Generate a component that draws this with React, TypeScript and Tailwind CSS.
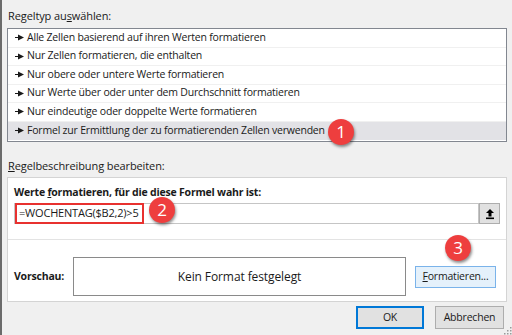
import React from 'react';

const rules = [
  'Alle Zellen basierend auf ihren Werten formatieren',
  'Nur Zellen formatieren, die enthalten',
  'Nur obere oder untere Werte formatieren',
  'Nur Werte über oder unter dem Durchschnitt formatieren',
  'Nur eindeutige oder doppelte Werte formatieren',
  'Formel zur Ermittlung der zu formatierenden Zellen verwenden',
];

const font = { fontFamily: '"Open Sans", "Noto Sans", sans-serif' };

const Badge = ({ n, className }: { n: number; className: string }) => (
  <div
    className={`absolute flex h-[26px] w-[26px] items-center justify-center rounded-full bg-[#ee3e3e] text-[17px] tracking-normal text-white shadow-[1px_2px_3px_rgba(0,0,0,0.45)] ${className}`}
  >
    {n}
  </div>
);

const Pointer = () => (
  <svg width="9" height="7" viewBox="0 0 9 7" className="shrink-0">
    <rect x="0" y="3" width="4" height="1" fill="#1a1a1a" />
    <path d="M3 0.5 L9 3.5 L3 6.5 Z" fill="#1a1a1a" />
  </svg>
);

const UploadIcon = () => (
  <svg width="10" height="12" viewBox="0 0 10 12">
    <path d="M5 1 L9 5 L6.5 5 L6.5 8.5 L3.5 8.5 L3.5 5 L1 5 Z" fill="#000" />
    <rect x="1" y="9.5" width="8" height="1.6" fill="#000" />
  </svg>
);

const Grip = () => (
  <svg width="10" height="10" viewBox="0 0 10 10">
    {[
      [8, 2],
      [5, 5],
      [8, 5],
      [2, 8],
      [5, 8],
      [8, 8],
    ].map(([x, y]) => (
      <rect key={`${x}-${y}`} x={x} y={y} width="1.5" height="1.5" fill="#9a9a9a" />
    ))}
  </svg>
);

const App = () => {
  return (
    <div
      className="relative h-[335px] w-[512px] overflow-hidden border-l-2 border-[#6b6b6b] bg-[#f0f0f0] pl-[5px] pr-[5px] text-[10.5px] tracking-[-0.2px] text-[#1a1a1a]"
      style={font}
    >
      {/* Regeltyp */}
      <div className="flex h-[28px] items-end pb-[4px] pl-[1px] text-[11px] tracking-[-0.1px]">
        <span>
          Regeltyp au<span className="underline">s</span>wählen:
        </span>
      </div>
      <div className="border border-[#828790] bg-white">
        {rules.map((r, i) => (
          <div
            key={r}
            className={`flex h-[18.5px] items-center gap-[3px] pl-[7px] ${
              i === rules.length - 1 ? 'bg-[#e2e2e6]' : 'border-b border-[#f0f0f0]'
            }`}
          >
            <Pointer />
            <span>{r}</span>
          </div>
        ))}
        <div className="h-[1px]" />
      </div>

      {/* Regelbeschreibung */}
      <div className="flex h-[35px] items-end pb-[3px] pl-[1px] text-[11px] tracking-[-0.1px]">
        <span>
          <span className="underline">R</span>egelbeschreibung bearbeiten:
        </span>
      </div>
      <div className="h-[125px] border border-[#d4d4d4] bg-white">
        <div className="border-b border-[#e3e3e3] px-[6px] pb-[15px] pt-[7px]">
          <div className="h-[18px] font-bold">
            Werte <span className="underline">f</span>ormatieren, für die diese Formel wahr ist:
          </div>
          <div className="flex h-[21px] items-stretch">
            <div className="flex flex-1 items-center border border-[#c5c5c5]">
              <div className="flex h-[21px] w-[129px] items-center border-2 border-[#e8312f] pl-[2px] text-[11px]">
                =WOCHENTAG($B2,2)&gt;5
              </div>
            </div>
            <div className="flex w-[21px] items-center justify-center border border-[#adadad] bg-[#e1e1e1]">
              <UploadIcon />
            </div>
          </div>
        </div>
        <div className="flex items-center pl-[6px] pr-[10px] pt-[17px]">
          <span className="w-[59px] font-bold">Vorschau:</span>
          <div className="flex h-[39px] w-[333px] items-center justify-center border border-[#8a8a8a] text-[12px] tracking-[-0.1px]">
            Kein Format festgelegt
          </div>
          <div className="ml-auto flex h-[22px] w-[81px] items-center justify-center border border-[#7ab3ea] bg-[#e5f1fb]">
            <span>
              <span className="underline">F</span>ormatieren...
            </span>
          </div>
        </div>
      </div>

      {/* Buttons */}
      <div className="flex justify-end gap-[11px] pr-[3px] pt-[4px]">
        <div className="flex h-[23px] w-[68px] items-center justify-center border-2 border-[#0078d7] bg-[#e1e1e1]">
          OK
        </div>
        <div className="flex h-[23px] w-[69px] items-center justify-center border border-[#adadad] bg-[#e1e1e1]">
          Abbrechen
        </div>
      </div>

      <div className="absolute bottom-0 right-0">
        <Grip />
      </div>

      <Badge n={1} className="left-[326px] top-[119px]" />
      <Badge n={2} className="left-[147px] top-[197px]" />
      <Badge n={3} className="left-[443px] top-[235px]" />
    </div>
  );
};

export default App;
